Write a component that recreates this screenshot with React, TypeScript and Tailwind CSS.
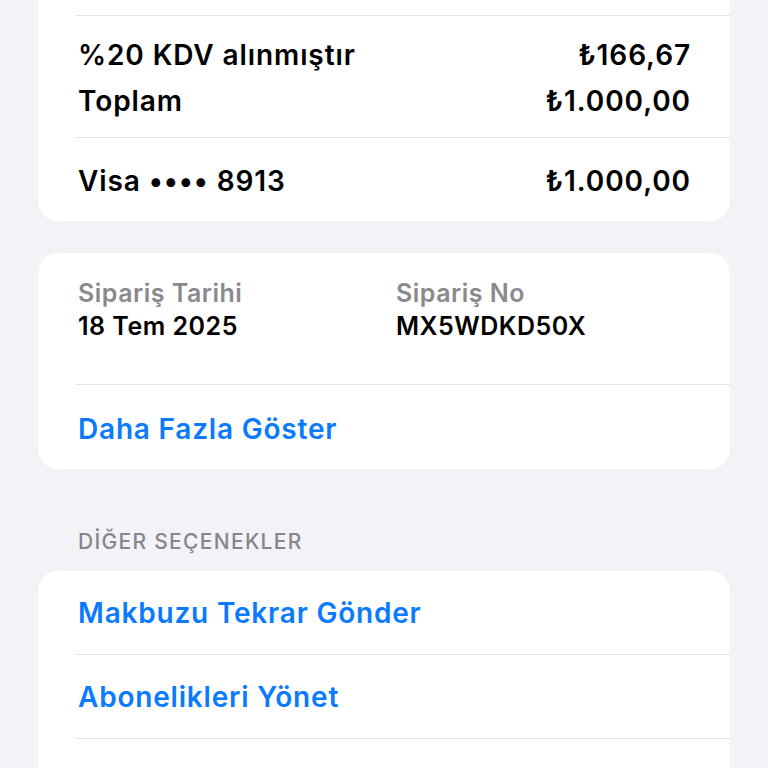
import React from "react";

const font = { fontFamily: '"Inter", "Noto Sans", "DejaVu Sans", sans-serif' };

function Separator() {
  return <div className="h-px bg-[#e3e3e8] ml-[38px]" />;
}

function Row({ left, right }: { left: string; right: string }) {
  return (
    <div className="flex justify-between items-center h-[46px] pl-[40px] pr-[39px] text-[28px] font-semibold text-black tracking-[0.9px]">
      <span>{left}</span>
      <span>{right}</span>
    </div>
  );
}

function ActionRow({ label }: { label: string }) {
  return (
    <div className="flex items-center h-[46px] pl-[40px] text-[28px] font-semibold text-[#0a7aff] tracking-[0.8px]">
      {label}
    </div>
  );
}

function InfoCell({ label, value }: { label: string; value: string }) {
  return (
    <div>
      <div className="h-[33px] flex items-center text-[25px] font-semibold text-[#8a8a8e]">{label}</div>
      <div className="h-[33px] flex items-center text-[25px] font-semibold text-black">{value}</div>
    </div>
  );
}

export default function App() {
  return (
    <div className="h-[768px] overflow-hidden bg-[#f2f2f7] px-[38px]" style={font}>
      {/* ÖDEME ÖZETİ */}
      <div className="bg-white rounded-b-[20px] pt-[15px]">
        <Separator />
        <div className="pt-[16px] pb-[13px]">
          <Row left="%20 KDV alınmıştır" right="₺166,67" />
          <Row left="Toplam" right="₺1.000,00" />
        </div>
        <Separator />
        <div className="pt-[20px] pb-[17px]">
          <Row left="Visa •••• 8913" right="₺1.000,00" />
        </div>
      </div>

      {/* SİPARİŞ BİLGİLERİ */}
      <div className="bg-white rounded-[20px] mt-[32px]">
        <div className="grid grid-cols-[318px_1fr] pl-[40px] pt-[24px] pb-[41px] tracking-[0.5px]">
          <InfoCell label="Sipariş Tarihi" value="18 Tem 2025" />
          <InfoCell label="Sipariş No" value="MX5WDKD50X" />
        </div>
        <Separator />
        <div className="pt-[21px] pb-[17px]">
          <ActionRow label="Daha Fazla Göster" />
        </div>
      </div>

      {/* DİĞER SEÇENEKLER */}
      <div className="mt-[59px] h-[28px] flex items-center pl-[40px] text-[21px] font-medium text-[#86868b] tracking-[1.3px] uppercase">
        DİĞER SEÇENEKLER
      </div>
      <div className="bg-white rounded-t-[20px] mt-[15px]">
        <div className="pt-[19px] pb-[18px]">
          <ActionRow label="Makbuzu Tekrar Gönder" />
        </div>
        <Separator />
        <div className="pt-[19px] pb-[18px]">
          <ActionRow label="Abonelikleri Yönet" />
        </div>
        <Separator />
        {/* next row is below the fold */}
        <div className="h-[83px]" />
      </div>
    </div>
  );
}
